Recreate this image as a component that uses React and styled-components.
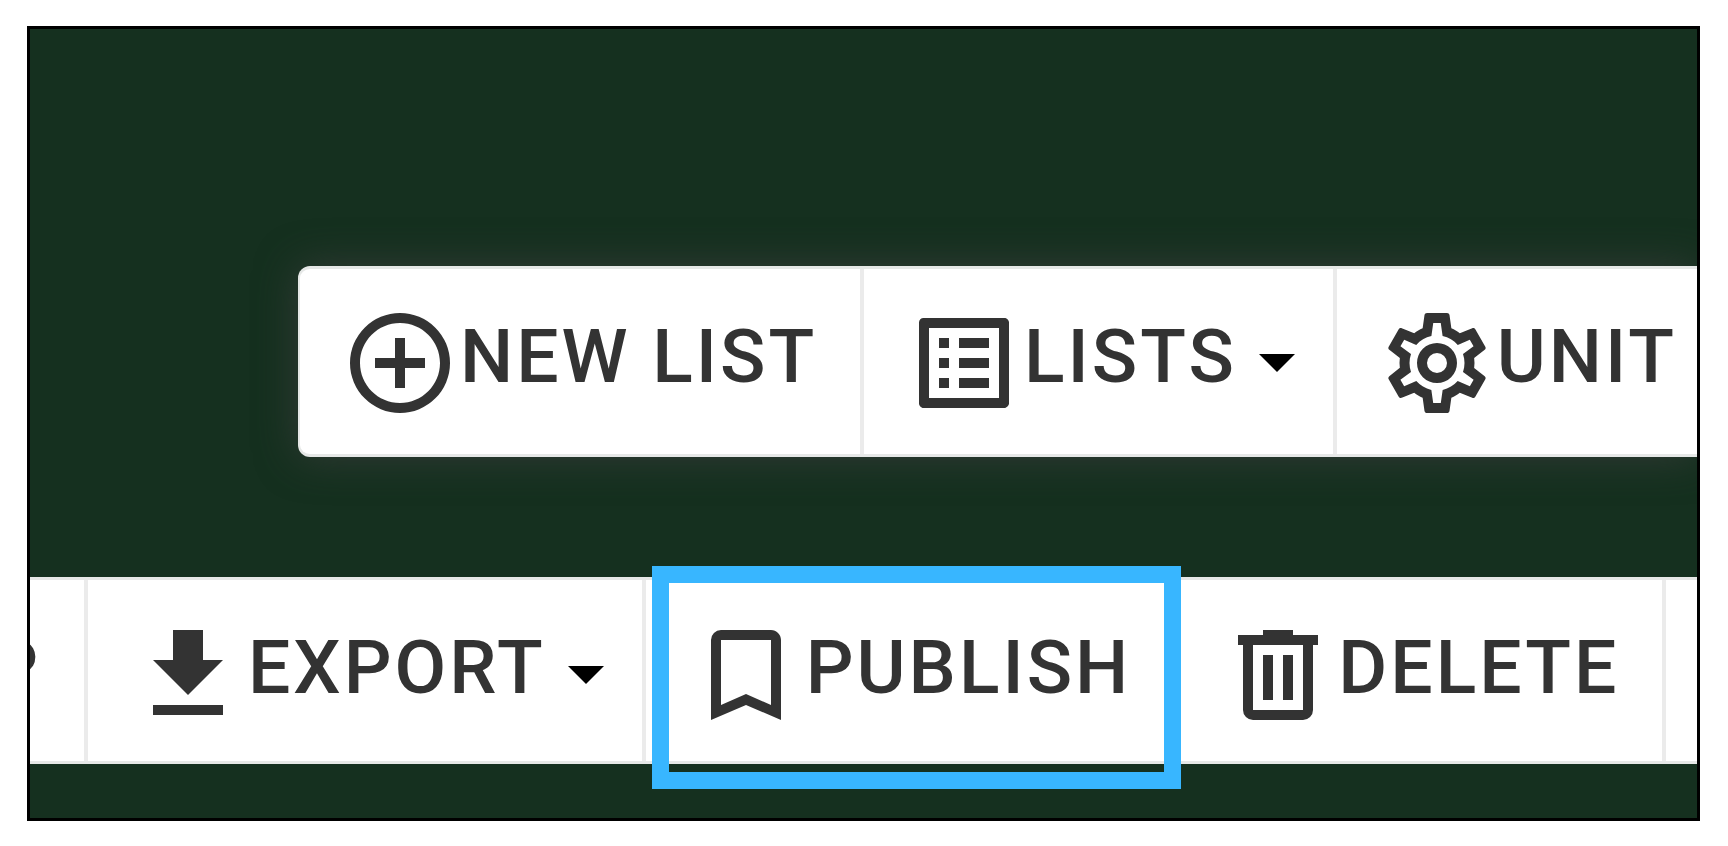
import React from "react";
import styled, { createGlobalStyle } from "styled-components";

const GlobalStyle = createGlobalStyle`
  * {
    box-sizing: border-box;
  }

  body {
    margin: 0;
    background: #ffffff;
  }
  `;

// styled components
const Frame = styled.main`
  display: flex;
  flex-direction: column;
  gap: 120px;

  margin: 26px 28px 25px 27px;
  padding: 237px 0 54px;
  border: 3px solid #000000;
  overflow: hidden;

  background: #15301f;
  `;

const ToolButton = styled.button`
  display: flex;
  flex: none;
  align-items: center;
  justify-content: ${(props) => (props.$cut ? "flex-end" : "flex-start")};

  width: ${(props) => (props.$cut ? "58px" : "auto")};
  padding: 0 ${(props) => (props.$menu ? "38px" : "43px")} 0 ${(props) => (props.$cut ? "0" : "40px")};
  border: 0;
  border-right: 4px solid #ebebeb;
  overflow: ${(props) => (props.$cut ? "hidden" : "visible")};

  background: transparent;
  color: #333333;
  font-family: Roboto, "Liberation Sans", sans-serif;
  font-size: 75px;
  font-weight: 500;
  line-height: 80px;
  letter-spacing: 3px;
  white-space: nowrap;
  cursor: pointer;
  `;

const Toolbar = styled.div`
  display: flex;

  height: ${(props) => (props.$floating ? "191px" : "187px")};
  margin-left: ${(props) => (props.$floating ? "268px" : "0")};
  border: solid #e6e8e7;
  border-width: ${(props) => (props.$floating ? "3px 0 3px 2px" : "3px 0")};
  border-radius: ${(props) => (props.$floating ? "12px 0 0 12px" : "0")};

  background: #ffffff;
  box-shadow: ${(props) => (props.$floating ? "0 0 40px #383c3ae0" : "none")};

  ${ToolButton} {
    padding-top: ${(props) => (props.$floating ? "3px" : "8px")};
  }
  `;

const Slot = styled.div`
  position: relative;
  display: flex;
  flex: none;
  `;

const Label = styled.span`
  padding-bottom: 15px;
  `;

const Icon = styled.svg`
  flex: none;
  width: 120px;
  height: 120px;
  fill: currentColor;
  `;

const Caret = styled.span`
  margin-left: 22px;
  border: solid transparent;
  border-width: 18px 18px 0;
  border-top-color: #000000;
  `;

const Highlight = styled.div`
  position: absolute;
  inset: -14px -3px -28px 6px;
  border: 17px solid #38b6ff;
  pointer-events: none;
  `;

const icons = {
  plus: "M12,20C7.59,20 4,16.41 4,12C4,7.59 7.59,4 12,4C16.41,4 20,7.59 20,12C20,16.41 16.41,20 12,20M12,2A10,10 0 0,0 2,12A10,10 0 0,0 12,22A10,10 0 0,0 22,12A10,10 0 0,0 12,2M13,7H11V11H7V13H11V17H13V13H17V11H13V7Z",
  list: "M11 7h6v2h-6zM11 11h6v2h-6zM11 15h6v2h-6zM7 7h2v2H7zM7 11h2v2H7zM7 15h2v2H7zM20.1 3H3.9c-.5 0-.9.4-.9.9v16.2c0 .4.4.9.9.9h16.2c.4 0 .9-.5.9-.9V3.9c0-.5-.5-.9-.9-.9zM19 19H5V5h14v14z",
  cog: "M12,8A4,4 0 0,1 16,12A4,4 0 0,1 12,16A4,4 0 0,1 8,12A4,4 0 0,1 12,8M12,10A2,2 0 0,0 10,12A2,2 0 0,0 12,14A2,2 0 0,0 14,12A2,2 0 0,0 12,10M10,22C9.75,22 9.54,21.82 9.5,21.58L9.13,18.93C8.5,18.68 7.96,18.34 7.44,17.94L4.95,18.95C4.73,19.03 4.46,18.95 4.34,18.73L2.34,15.27C2.21,15.05 2.27,14.78 2.46,14.63L4.57,12.97L4.5,12L4.57,11L2.46,9.37C2.27,9.22 2.21,8.95 2.34,8.73L4.34,5.27C4.46,5.05 4.73,4.96 4.95,5.05L7.44,6.05C7.96,5.66 8.5,5.32 9.13,5.07L9.5,2.42C9.54,2.18 9.75,2 10,2H14C14.25,2 14.46,2.18 14.5,2.42L14.87,5.07C15.5,5.32 16.04,5.66 16.56,6.05L19.05,5.05C19.27,4.96 19.54,5.05 19.66,5.27L21.66,8.73C21.79,8.95 21.73,9.22 21.54,9.37L19.43,11L19.5,12L19.43,13L21.54,14.63C21.73,14.78 21.79,15.05 21.66,15.27L19.66,18.73C19.54,18.95 19.27,19.04 19.05,18.95L16.56,17.95C16.04,18.34 15.5,18.68 14.87,18.93L14.5,21.58C14.46,21.82 14.25,22 14,22H10M11.25,4L10.88,6.61C9.68,6.86 8.62,7.5 7.85,8.39L5.44,7.35L4.69,8.65L6.8,10.2C6.4,11.37 6.4,12.64 6.8,13.8L4.68,15.36L5.43,16.66L7.86,15.62C8.63,16.5 9.68,17.14 10.87,17.38L11.24,20H12.76L13.13,17.39C14.32,17.14 15.37,16.5 16.14,15.62L18.57,16.66L19.32,15.36L17.2,13.81C17.6,12.64 17.6,11.37 17.2,10.2L19.31,8.65L18.56,7.35L16.15,8.39C15.38,7.5 14.32,6.86 13.12,6.62L12.75,4H11.25Z",
  download: "M5,20H19V18H5M19,9H15V3H9V9H5L12,16L19,9Z",
  bookmark: "M17,18L12,15.82L7,18V5H17M17,3H7A2,2 0 0,0 5,5V21L12,18L19,21V5C19,3.89 18.1,3 17,3Z",
  trash: "M9,3V4H4V6H5V19A2,2 0 0,0 7,21H17A2,2 0 0,0 19,19V6H20V4H15V3H9M7,6H17V19H7V6M9,8V17H11V8H9M13,8V17H15V8H13Z",
};

// one toolbar entry: icon, caption and an optional menu arrow
function Tool({ icon, label, menu, cut }) {
  return (
    <ToolButton type="button" $cut={cut} $menu={menu} aria-haspopup={menu ? "menu" : undefined}>
      {icon && (
        <Icon viewBox="0 0 24 24" aria-hidden="true">
          <path d={icons[icon]} />
        </Icon>
      )}
      <Label>{label}</Label>
      {menu && <Caret />}
    </ToolButton>
  );
}

// 'App' COMPONENT
function App() {
  return (
    <>
      <GlobalStyle />
      <Frame>
        <Toolbar $floating>
          <Tool icon="plus" label="NEW LIST" />
          <Tool icon="list" label="LISTS" menu />
          <Tool icon="cog" label="UNIT" />
        </Toolbar>

        <Toolbar>
          <Tool label="P" cut />
          <Tool icon="download" label="EXPORT" menu />
          <Slot>
            <Tool icon="bookmark" label="PUBLISH" />
            <Highlight />
          </Slot>
          <Tool icon="trash" label="DELETE" />
        </Toolbar>
      </Frame>
    </>
  );
}

export default App;
